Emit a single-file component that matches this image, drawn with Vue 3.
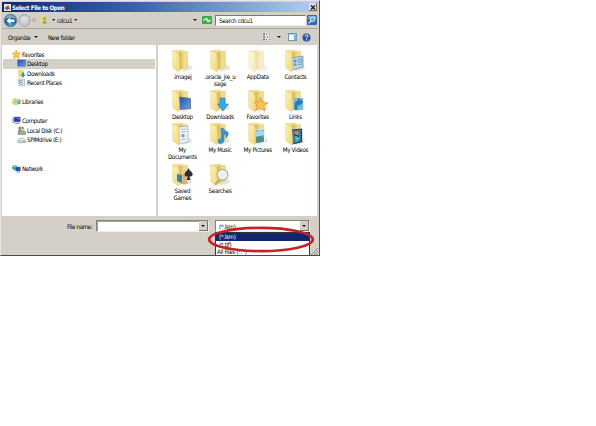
<script setup>
const places = [
  { name: 'Favorites', icon: 'star', top: true },
  { name: 'Desktop', icon: 'desktop', selected: true },
  { name: 'Downloads', icon: 'download' },
  { name: 'Recent Places', icon: 'recent' },
  { gap: true },
  { name: 'Libraries', icon: 'library', top: true },
  { gap: true },
  { name: 'Computer', icon: 'computer', top: true },
  { name: 'Local Disk (C:)', icon: 'disk' },
  { name: 'SPIMdrive (E:)', icon: 'drive' },
  { gap: true, tall: true },
  { name: 'Network', icon: 'network', top: true }
]
const rows = [
  [
    { lines: ['.imagej'], kind: 'plain' },
    { lines: ['.oracle_jre_u', 'sage'], kind: 'plain' },
    { lines: ['AppData'], kind: 'plain', faded: true },
    { lines: ['Contacts'], kind: 'contacts' }
  ],
  [
    { lines: ['Desktop'], kind: 'desktop' },
    { lines: ['Downloads'], kind: 'downloads' },
    { lines: ['Favorites'], kind: 'favorites' },
    { lines: ['Links'], kind: 'links' }
  ],
  [
    { lines: ['My', 'Documents'], kind: 'documents' },
    { lines: ['My Music'], kind: 'music' },
    { lines: ['My Pictures'], kind: 'pictures' },
    { lines: ['My Videos'], kind: 'videos' }
  ],
  [
    { lines: ['Saved', 'Games'], kind: 'games' },
    { lines: ['Searches'], kind: 'searches' }
  ]
]
</script>

<template>
  <div class="window">
    <svg class="defs" width="0" height="0">
      <defs>
        <linearGradient id="front" x1="0" y1="0" x2="1" y2="1">
          <stop offset="0" stop-color="#fff3b4" /><stop offset="1" stop-color="#ecd77c" />
        </linearGradient>
        <linearGradient id="inner" x1="0" y1="0" x2="1" y2="0">
          <stop offset="0" stop-color="#d5b24a" /><stop offset="1" stop-color="#f4e297" />
        </linearGradient>
        <linearGradient id="blue" x1="0" y1="0" x2="1" y2="1">
          <stop offset="0" stop-color="#224fae" /><stop offset="1" stop-color="#6ba4e4" />
        </linearGradient>
        <radialGradient id="orb" cx=".5" cy=".85" r=".8">
          <stop offset="0" stop-color="#3cb2df" /><stop offset=".6" stop-color="#1d5b96" /><stop offset="1" stop-color="#587ea8" />
        </radialGradient>
      </defs>
    </svg>

    <header class="title">
      <svg class="app" width="7" height="7" viewBox="0 0 7 7">
        <rect width="7" height="7" fill="#e9e6e8" />
        <path d="M.5 4 2.5 3 4 1 6.5 5.6 4.8 5 3 6.2Z" fill="#b7492c" />
        <path d="M.5 4 2.5 3 3.5 2 3 5Z" fill="#385d8c" />
      </svg>
      <span class="caption">Select File to Open</span>
      <span class="close"><svg width="6" height="5" viewBox="0 0 6 5"><path d="M1 .5 5 4.5M5 .5 1 4.5" stroke="#111" stroke-width="1.1" /></svg></span>
    </header>

    <nav class="nav">
      <svg class="orbs" width="36" height="15" viewBox="0 0 36 15">
        <circle cx="8.5" cy="7.5" r="6.3" fill="url(#orb)" stroke="#5b7897" stroke-width=".7" />
        <path d="M3.1 5.7A5.8 5.8 0 0 1 13.8 5.7Q8.5 3.5 3.1 5.7Z" fill="#a5bfd8" opacity=".75" />
        <path d="M4.5 7.7 8.3 4.3V6.5H12.5V9H8.3V11Z" fill="#fff" />
        <circle cx="22.4" cy="7.5" r="5.7" fill="#c9cbd0" stroke="#8995a8" stroke-width=".8" />
        <path d="M18 5.5Q22 1.6 27 5.5Q24 8 18 5.5Z" fill="#e0e2e5" />
        <path d="M25 7.6 22.5 5V6.8H19.5V8.3H22.5V10Z" fill="#dcdde0" />
        <path d="M30.3 6.2H34.2L32.3 9Z" fill="#eee" stroke="#7c7c82" stroke-width=".6" />
      </svg>
      <svg class="crumb-icon" width="9" height="10" viewBox="0 0 9 10">
        <path d="M1 1.5 4 .6V9.5L1 8.4Z" fill="#eed779" /><path d="M3.5 1H8V8.5H3.5Z" fill="#d9d18c" />
        <circle cx="5.6" cy="3.7" r="1.5" fill="#99a775" /><path d="M3.4 8.6Q5.6 3 7.8 8.6Z" fill="#6da676" />
      </svg>
      <i class="arrow small" />
      <span class="crumb">cdcu1</span>
      <i class="arrow small" />
      <i class="arrow history" />
      <span class="refresh">
        <svg width="10" height="8" viewBox="0 0 10 8">
          <rect width="10" height="8" rx=".8" fill="#3eaa46" />
          <path d="M1 4.5Q1.5 2 4 2.5V1L6 3.2 4 5V3.8Q2.5 3.6 2.3 4.5Z" fill="#e5ffe4" />
          <path d="M9 3.5Q8.5 6.2 6.5 5.6V7L4.6 5 6.5 3.4V4.4Q7.6 4.4 7.8 3.5Z" fill="#e5ffe4" />
        </svg>
      </span>
      <span class="search">Search cdcu1</span>
      <svg class="go" width="10" height="10" viewBox="0 0 10 10">
        <rect width="10" height="10" rx="1" fill="#2e68b0" /><rect x="1" y="1" width="8" height="3" fill="#74a8db" />
        <circle cx="5.7" cy="4.3" r="2.3" fill="#69a8df" stroke="#e3f2ff" stroke-width=".9" /><path d="M4 6 1.7 8.3" stroke="#e3f2ff" stroke-width="1.2" />
      </svg>
    </nav>

    <div class="toolbar">
      <span class="organize">Organize</span>
      <i class="arrow" />
      <span class="newfolder">New folder</span>
      <svg class="views" width="9" height="8" viewBox="0 0 9 8">
        <rect x=".5" y=".5" width="8" height="7" fill="#e4e2de" />
        <path d="M1 1.3H3M1 4H3M1 6.5H3" stroke="#5d6e8a" stroke-width="1.4" /><path d="M4 1.3H5M7 1.3H8M4 6.5H5" stroke="#818b98" />
        <path d="M5 4H6" stroke="#ba6258" stroke-width="1.4" /><path d="M7 6.5H8.5M7 4H8" stroke="#7aab91" stroke-width="1.2" />
      </svg>
      <i class="arrow" />
      <svg class="preview" width="9" height="8" viewBox="0 0 9 8">
        <rect x=".5" y=".5" width="8" height="7" fill="#fff" stroke="#7398b5" /><path d="M1 1H8" stroke="#5f96c2" /><rect x="5.8" y="2" width="2.4" height="5" fill="#79b4dc" />
      </svg>
      <svg class="help" width="9" height="9" viewBox="0 0 9 9">
        <circle cx="4.5" cy="4.5" r="4" fill="#294d9b" stroke="#7c8eae" stroke-width=".6" />
        <path d="M3 3.4Q3.2 2 4.6 2 6 2 6 3.2 6 4 4.6 4.7V5.4M4.6 6.2V7.2" fill="none" stroke="#fff" stroke-width="1" />
      </svg>
    </div>

    <main class="panes">
      <aside class="tree">
        <div v-for="(p, i) in places" :key="i" class="place" :class="{ top: p.top, selected: p.selected, gap: p.gap, tall: p.tall }">
          <svg v-if="p.icon" class="picon" width="9" height="9" viewBox="0 0 9 9">
            <path v-if="p.icon === 'star'" d="M4.3.3 5.5 3 8.6 3.2 6.3 5.3 7.3 8.5 4.4 6.8 1.6 8.5 2.3 5.3.2 3.3 3.2 3Z" fill="#ffc44b" stroke="#dd9232" stroke-width=".6" />
            <g v-else-if="p.icon === 'desktop'"><rect x=".8" y="1" width="7.7" height="6" fill="url(#blue)" stroke="#45618e" stroke-width=".6" /><path d="M1 7.6H8" stroke="#8598b4" /></g>
            <g v-else-if="p.icon === 'download'"><path d="M1 1 4 .4 7 1.4V7.8L3.5 8.6 1 7.5Z" fill="#f0dc83" /><path d="M5 3.5H7V5.5H8.6L6 8.8 3.6 5.5H5Z" fill="#3f8fb8" /></g>
            <g v-else-if="p.icon === 'recent'"><path d="M1 1H7.5V7.8H2.2Z" fill="#e8edf1" stroke="#8d9eaf" stroke-width=".6" /><path d="M2 2.5H6M4 4.4H6.4M3 6.3H6" stroke="#8597ad" stroke-width=".7" /><circle cx="3" cy="4.6" r="1.2" fill="#bccbda" stroke="#8597ad" stroke-width=".4" /></g>
            <g v-else-if="p.icon === 'library'"><path d="M.5 2 2 1H4L5 2H8V7H.5Z" fill="#ead379" /><rect x="3" y="3" width="5.5" height="4" fill="#5ba58c" /><path d="M0 4.5H5L6.5 8H1.5Z" fill="#b9d898" /><path d="M3 4H7" stroke="#c8edf3" /></g>
            <g v-else-if="p.icon === 'computer'"><path d="M.3 1.5H2V7H.3Z" fill="#a4afbb" /><rect x="2" y="1" width="6.3" height="5" fill="#263eb0" stroke="#8993b8" stroke-width=".7" /><path d="M5 2H7.5V4Z" fill="#7189e6" /><path d="M3 7.5H7.5" stroke="#9aa4b5" stroke-width="1.3" /></g>
            <g v-else-if="p.icon === 'disk'"><path d="M1 6 2.5 4.5H7L8.5 6V8.5H1Z" fill="#9bab9a" stroke="#697d74" stroke-width=".5" /><path d="M1.5 1 4 .6V3L1.5 3.3Z" fill="#ce7046" /><path d="M4.4.7 6.7 1V3.5L4.4 3Z" fill="#68a35a" /><path d="M1.5 3.5 4 3.2V5.5H1.5Z" fill="#4a86ba" /><path d="M4.4 3.4 6.7 3.7V5.6H4.4Z" fill="#dfbf4b" /><path d="M6 7.3H7.8" stroke="#4ec34e" /></g>
            <g v-else-if="p.icon === 'drive'"><path d="M.8 5 2.2 3.5H7L8.5 5V7.8H.8Z" fill="#cbcfd0" stroke="#929999" stroke-width=".5" /><path d="M1.5 4.5H7.7" stroke="#f0f1f1" /><path d="M6 6.5H7.8" stroke="#4ec34e" /></g>
            <g v-else><circle cx="2.7" cy="3.5" r="2.6" fill="#42a89b" /><path d="M1 2Q2.5.6 4 2.3L2 3.2Z" fill="#a0dec1" /><rect x="3.6" y="3" width="4.8" height="4" fill="#204ea9" stroke="#6b8eb5" stroke-width=".5" /><path d="M4.5 8H8" stroke="#729dc1" /></g>
          </svg>
          <span v-if="p.name">{{ p.name }}</span>
        </div>
      </aside>

      <section class="files">
        <div v-for="(row, r) in rows" :key="r" class="row" :class="'row' + r">
          <div v-for="f in row" :key="f.lines[0]" class="file">
            <svg width="24" height="24" viewBox="0 0 24 24" :class="{ faded: f.faded }">
              <path d="M14 18 21 16 22 20 12 23Z" fill="#d9d9d4" opacity=".7" />
              <path d="M3 1.8 12 1 13.5 2.2 17.5 2.3 18 18 10 21Z" fill="#efdc8a" stroke="#d9c985" stroke-width=".4" />
              <path d="M9 3 15 2.7V18L10 21Z" fill="url(#inner)" />
              <template v-if="f.kind === 'contacts'">
                <path d="M9 9 20 7V18L9 21Z" fill="#b5d5e8" stroke="#6694b2" stroke-width=".8" /><circle cx="12" cy="12" r="1.5" fill="#6395b6" /><path d="M10 17Q12 12 14 16Z" fill="#6395b6" /><path d="M15.5 10.5 18.5 10V13L15.5 13.5ZM15 16 18.5 15" fill="none" stroke="#5d8ba8" stroke-width=".7" />
              </template>
              <path v-else-if="f.kind === 'desktop'" d="M9 8 20.5 9.5V19.5L9 20.5Z" fill="url(#blue)" stroke="#596985" stroke-width=".8" />
              <g v-else-if="f.kind === 'documents'"><path d="M9 5 18 4V20L9 22Z" fill="#edf2f7" stroke="#91a2b5" stroke-width=".6" /><path d="M11 7.5 16.5 7M11 10 16 9.5M11 18 16 17" stroke="#94aabc" stroke-width=".7" /><circle cx="13" cy="13.7" r="1.7" fill="#78a4ca" /></g>
              <g v-else-if="f.kind === 'pictures'"><path d="M9 8 18.5 7V20L9 22Z" fill="#5ea4dc" stroke="#e9f1f3" /><path d="M10 10Q13 7 18 9V13L10 15Z" fill="#a9d6ef" /><path d="M9.6 15 14 14 18 16V19.5L9.6 21Z" fill="#518e83" /></g>
              <g v-else-if="f.kind === 'videos'"><path d="M9 8 18.5 7V20L9 22Z" fill="#397fa5" stroke="#303e47" /><path d="M9 8V22M18.5 7V20" stroke="#25333b" stroke-width="1.5" stroke-dasharray="1 1" /><circle cx="13.7" cy="11.3" r="2" fill="#de795b" /><path d="M12 14 17 16 13 20Z" fill="#4fc0ce" /><path d="M11 12.5 16 14.5" stroke="#242d34" /></g>
              <path v-if="f.kind === 'music'" d="M13 6.5 15 6Q16 9 20 10 21 14 18 16 19 13 16 12V19Q15 22 11 21.5 8.5 20 10 18 12 16 13.5 17Z" fill="#3995cf" stroke="#2575ad" stroke-width=".5" />
              <path d="M2.6 1.8 8.8 4.5 9.8 21.5 8.6 22.7 2.9 19Z" fill="url(#front)" stroke="#ddc978" stroke-width=".5" />
              <g v-if="f.kind === 'games'"><path d="M7 11 12 12V20L7 18Z" fill="#3a83ab" /><circle cx="14" cy="8" r="2.2" fill="#e9cca8" /><path d="M12 11H16L16 17 18 21H11L13 17Z" fill="#d6b083" /><path d="M18.5 5Q19.5 7.5 21.5 9 24 11.5 21.5 13.3 20.4 13.8 19.4 12.9L20.6 17H16.6L17.8 12.9Q16.6 13.8 15.5 13.3 13.5 11.5 15.6 9 17.8 7.5 18.5 5Z" fill="#302f31" /></g>
              <g v-if="f.kind === 'searches'"><path d="M11 17 7 21.5" stroke="#c49b55" stroke-width="1.6" /><circle cx="14.5" cy="11.8" r="5.5" fill="#eff3f0" fill-opacity=".85" stroke="#a4adaa" stroke-width="1.2" /><path d="M11 11Q12 8 15 8" stroke="#fff" fill="none" /></g>
              <path v-if="f.kind === 'downloads'" d="M12 9H17V15H20.5L15 22 9.5 15H12Z" fill="#3ba9e1" stroke="#2381be" stroke-width=".6" />
              <path v-if="f.kind === 'favorites'" d="M14.5 8.5 16.5 13.3 22 14 17.8 17 19 22 14.5 19.3 9.5 21.5 11.4 16.7 8.3 13 13 13Z" fill="#ffc24b" stroke="#d99232" stroke-width=".7" />
              <g v-if="f.kind === 'links'"><path d="M11 9H20V21H11Z" fill="#7bb9d9" /><path d="M11.5 21V16Q11.5 12 15 11.6V9L20.5 13 15.5 17.5V15Q14 15.5 14.5 21Z" fill="#217fb5" /></g>
            </svg>
            <span v-for="line in f.lines" :key="line" class="label">{{ line }}</span>
          </div>
        </div>
      </section>
    </main>

    <footer class="bottom">
      <label class="fname">File name:</label>
      <div class="combo name"><b><i class="arrow" /></b></div>
      <div class="combo type"><span>(*.lsm)</span><b><i class="arrow" /></b></div>
      <div class="menu">
        <div class="opt active">(*.lsm)</div>
        <div class="opt">(*.tif)</div>
        <div class="opt last">All Files (*.*)</div>
      </div>
      <svg class="ring" width="110" height="30" viewBox="0 0 110 30"><ellipse cx="55" cy="14.5" rx="51.8" ry="11.6" fill="none" stroke="#c9202b" stroke-width="2.7" /></svg>
      <svg class="grip" width="7" height="7" viewBox="0 0 7 7"><path d="M0 7 7 0M3 7 7 3M5.5 7 7 5.5" stroke="#8b8780" stroke-width=".9" /></svg>
    </footer>
  </div>
</template>

<style>
body { margin: 0; background: #fff; overflow: hidden; }
</style>

<style scoped>
.window {
  box-sizing: border-box; width: 320px; height: 256px; display: flex; flex-direction: column;
  border: 1px solid #e8e5df; border-right: 1px solid #55534f; border-bottom: 1px solid #4c4b49;
  background: #d4d0c8; font: 6.2px/9px "DejaVu Sans Condensed", "DejaVu Sans", sans-serif; color: #000;
  letter-spacing: -.32px; white-space: nowrap; position: relative; overflow: hidden;
}
svg { display: block; flex: none; }
.defs { position: absolute; }
.title { height: 10px; flex: none; margin: 1px 1px 0; display: flex; align-items: center; background: linear-gradient(90deg, #0c2b70, #3a61a7 42%, #a6caf0 96%); }
.app { margin-left: 2px; }
.caption { margin-left: 1px; color: #fff; font-weight: bold; letter-spacing: -.38px; }
.close { margin-left: auto; margin-right: 1px; width: 8px; height: 8px; display: grid; place-items: center; background: #dedbd4; box-shadow: inset -1px -1px #77736c; }
.nav { height: 16px; flex: none; display: flex; align-items: center; border-bottom: 1px solid #aaa69e; margin: 0 1px; }
.crumb-icon { margin: 0 4px 0 1px; }
.arrow { width: 0; height: 0; flex: none; border: 2px solid transparent; border-top: 2.5px solid #171717; border-bottom: 0; }
.small { border-left-width: 2px; border-right-width: 1px; border-top-width: 2px; }
.crumb { margin: 0 4px 0 2px; width: 13px; }
.history { margin-left: auto; }
.refresh { margin: 0 3px 0 5px; }
.search { box-sizing: border-box; width: 91px; height: 11px; background: #fff; border: 1px solid #777; border-right-color: #eee; border-bottom-color: #eee; padding-left: 3px; line-height: 9px; }
.go { margin: 0 1px; }
.toolbar { height: 16px; flex: none; display: flex; align-items: center; padding: 0 6px 0 7px; }
.organize { width: 26px; }
.newfolder { margin-left: 10px; }
.views { margin-left: auto; margin-right: 6px; }
.preview { margin: 0 5px 0 7px; }
.help { margin-right: 2px; }
.panes { height: 171px; flex: none; display: flex; gap: 2px; margin: 0 2px 0 1px; }
.tree { box-sizing: border-box; width: 154px; background: #fff; padding: 4.5px 1px 0; }
.place { height: 9.5px; display: flex; align-items: center; gap: 1px; padding-left: 14px; }
.place.top { padding-left: 9px; }
.place.selected { background: #d4d0c8; }
.place.gap.tall { height: 19px; }
.files { flex: 1; background: #fff; padding: 4px 0 0 5.5px; }
.row { display: flex; height: 40px; }
.row1 { height: 33px; }
.row2 { height: 41px; }
.file { width: 37.7px; display: flex; flex-direction: column; align-items: center; }
.label { line-height: 7px; }
.faded { opacity: .5; }
.bottom { flex: 1; position: relative; display: flex; align-items: flex-start; padding: 4px 0 0 66px; }
.fname { width: 29px; line-height: 13px; }
.combo { box-sizing: border-box; height: 12px; background: #fff; border: 1px solid #85817b; border-right-color: #eee; border-bottom-color: #eee; display: flex; justify-content: flex-end; line-height: 11px; }
.combo b { width: 8px; height: 9px; display: grid; place-items: center; background: #d4d0c8; border-right: 1px solid #77736c; border-bottom: 1px solid #77736c; }
.name { width: 113px; box-shadow: inset 1px 1px #a9a6a0; }
.type { width: 95px; margin-left: 6px; }
.type span { flex: 1; padding-left: 3px; }
.menu { position: absolute; left: 214px; top: 16px; width: 93px; height: 22px; border: 1px solid #333; border-bottom: 0; background: #fff; overflow: hidden; }
.opt { height: 8px; line-height: 8px; padding-left: 3px; }
.opt.active { background: #11266c; color: #fff; }
.opt.last { line-height: 6px; padding-left: 1px; }
.ring { position: absolute; left: 205px; top: 9px; }
.grip { position: absolute; right: 1px; bottom: 0; }
</style>
